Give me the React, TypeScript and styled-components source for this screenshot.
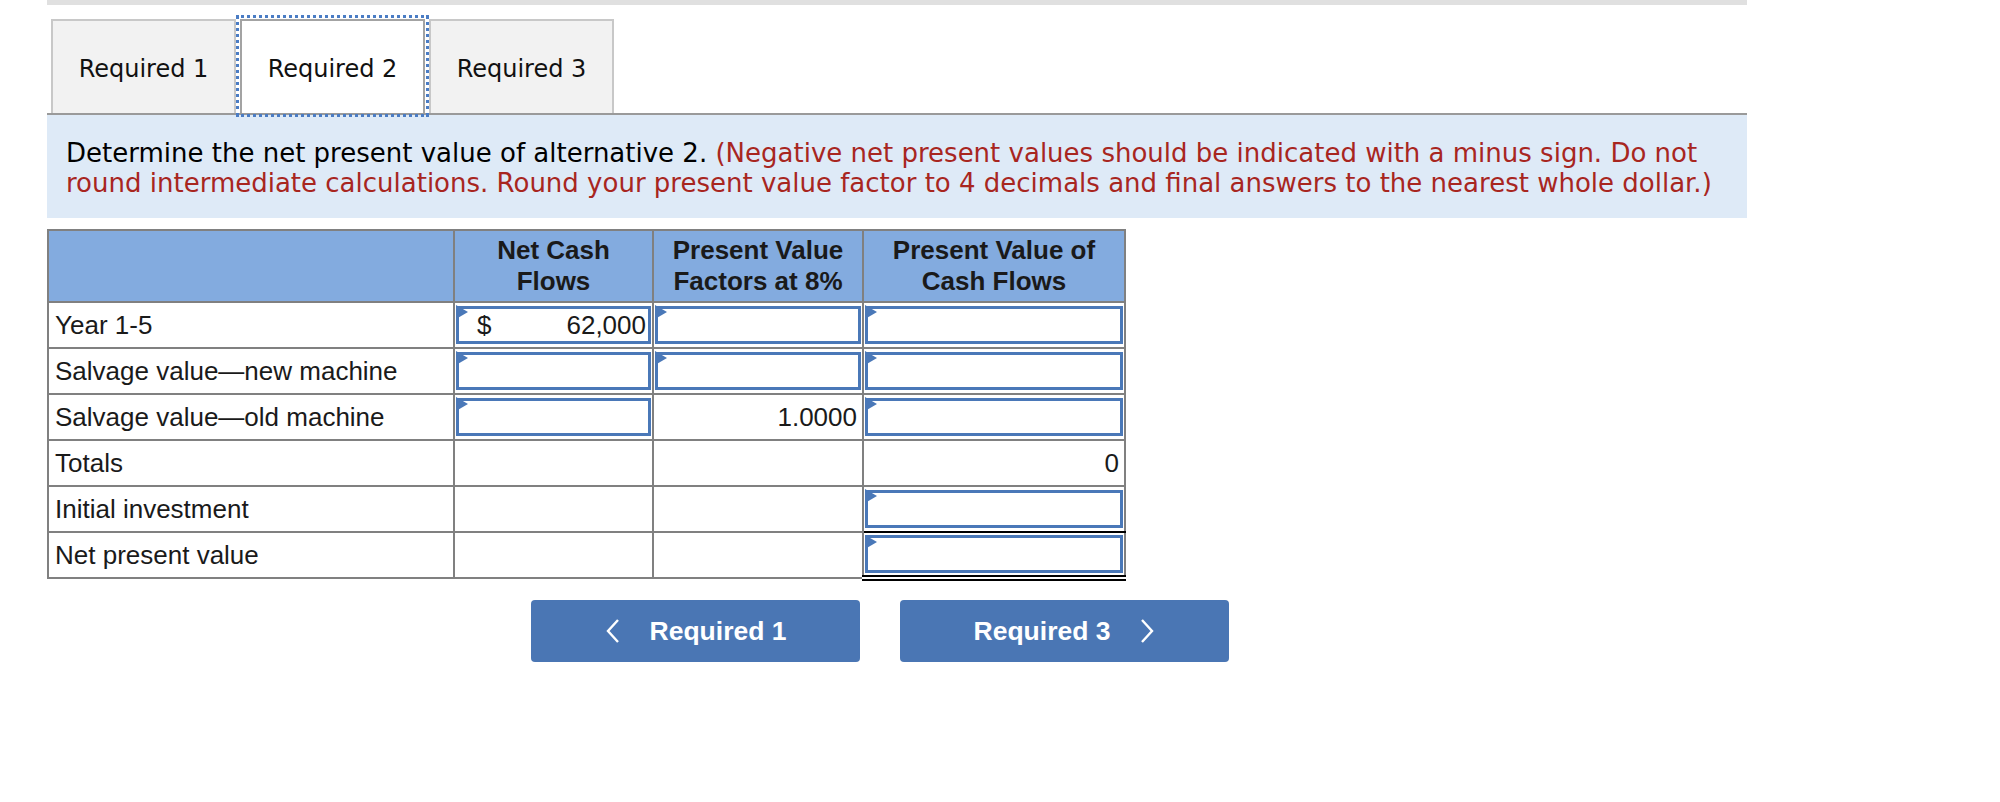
import styled, { createGlobalStyle } from 'styled-components';

const GlobalStyle = createGlobalStyle`
  body {
    margin: 0;
    background: #fff;
    font-family: "Liberation Sans", Arial, sans-serif;
  }
`;

type Rule = 'single' | 'double' | undefined;

type Cell = {
  kind: 'input' | 'text' | 'empty';
  value?: string;
  dollar?: boolean;
  rule?: Rule;
};

type Row = { label: string; cells: Cell[] };

const rows: Row[] = [
  {
    label: 'Year 1-5',
    cells: [
      { kind: 'input', value: '62,000', dollar: true },
      { kind: 'input' },
      { kind: 'input' },
    ],
  },
  {
    label: 'Salvage value\u2014new machine',
    cells: [{ kind: 'input' }, { kind: 'input' }, { kind: 'input' }],
  },
  {
    label: 'Salvage value\u2014old machine',
    cells: [{ kind: 'input' }, { kind: 'text', value: '1.0000' }, { kind: 'input' }],
  },
  {
    label: 'Totals',
    cells: [{ kind: 'empty' }, { kind: 'empty' }, { kind: 'text', value: '0' }],
  },
  {
    label: 'Initial investment',
    cells: [{ kind: 'empty' }, { kind: 'empty' }, { kind: 'input', rule: 'single' }],
  },
  {
    label: 'Net present value',
    cells: [{ kind: 'empty' }, { kind: 'empty' }, { kind: 'input', rule: 'double' }],
  },
];

const ChevronLeft = () => (
  <svg width="15" height="26" viewBox="0 0 15 26" fill="none">
    <polyline points="13,2 3,13 13,24" stroke="#fff" strokeWidth="2.4" />
  </svg>
);

const ChevronRight = () => (
  <svg width="15" height="26" viewBox="0 0 15 26" fill="none">
    <polyline points="2,2 12,13 2,24" stroke="#fff" strokeWidth="2.4" />
  </svg>
);

const App = () => {
  return (
    <Page>
      <GlobalStyle />
      <TopBar />
      <Tabs>
        <Tab>Required 1</Tab>
        <Tab $active>Required 2</Tab>
        <Tab>Required 3</Tab>
      </Tabs>
      <Question>
        Determine the net present value of alternative 2.{' '}
        <Hint>
          (Negative net present values should be indicated with a minus sign. Do not
          round intermediate calculations. Round your present value factor to 4
          decimals and final answers to the nearest whole dollar.)
        </Hint>
      </Question>

      <Table>
        <colgroup>
          <col style={{ width: 406 }} />
          <col style={{ width: 199 }} />
          <col style={{ width: 210 }} />
          <col style={{ width: 262 }} />
        </colgroup>
        <thead>
          <tr>
            <HeadCell />
            <HeadCell>
              Net Cash
              <br />
              Flows
            </HeadCell>
            <HeadCell>
              Present Value
              <br />
              Factors at 8%
            </HeadCell>
            <HeadCell>
              Present Value of
              <br />
              Cash Flows
            </HeadCell>
          </tr>
        </thead>
        <tbody>
          {rows.map((row) => (
            <BodyRow key={row.label}>
              <LabelCell>{row.label}</LabelCell>
              {row.cells.map((cell, i) => (
                <ValueCell key={i} $rule={cell.rule}>
                  {cell.kind === 'input' && (
                    <>
                      <InputBox>
                        {cell.dollar && <Dollar>$</Dollar>}
                        <span>{cell.value}</span>
                      </InputBox>
                      <Marker />
                    </>
                  )}
                  {cell.kind === 'text' && <PlainValue>{cell.value}</PlainValue>}
                </ValueCell>
              ))}
            </BodyRow>
          ))}
        </tbody>
      </Table>

      <Nav>
        <NavButton>
          <ChevronLeft />
          <span>Required 1</span>
        </NavButton>
        <NavButton>
          <span>Required 3</span>
          <ChevronRight />
        </NavButton>
      </Nav>
    </Page>
  );
};

export default App;

const Page = styled.div`
  margin-left: 47px;
  width: 1700px;
  padding-bottom: 40px;
`;

const TopBar = styled.div`
  height: 5px;
  background: #e0e0e0;
`;

const Tabs = styled.div`
  display: flex;
  gap: 4px;
  margin-top: 14px;
  padding-left: 4px;
  height: 94px;
`;

const Tab = styled.div<{ $active?: boolean }>`
  display: flex;
  align-items: center;
  justify-content: center;
  box-sizing: border-box;
  width: 185px;
  padding-top: 3px;
  font-family: "DejaVu Sans", Verdana, sans-serif;
  font-size: 24px;
  color: #111;
  background: ${(p) => (p.$active ? '#fff' : '#f2f2f2')};
  border: 2px solid ${(p) => (p.$active ? '#a3a3a3' : '#c8c8c8')};
  border-bottom: none;
  outline: ${(p) => (p.$active ? '3px dotted #4a7cc4' : 'none')};
  outline-offset: 1px;
  position: relative;
  z-index: ${(p) => (p.$active ? 1 : 0)};
`;

const Question = styled.div`
  background: #deeaf7;
  border-top: 2px solid #9a9a9a;
  padding: 23px 19px 20px;
  font-family: "DejaVu Sans", Verdana, sans-serif;
  font-size: 26px;
  line-height: 30px;
  color: #000;
`;

const Hint = styled.span`
  color: #a8261f;
`;

const Table = styled.table`
  margin-top: 11px;
  width: 1077px;
  table-layout: fixed;
  border-collapse: collapse;
  font-family: "Liberation Sans", Arial, sans-serif;
  font-size: 26px;
  color: #1a1a1a;
`;

const HeadCell = styled.th`
  background: #83abdf;
  border: 2px solid #808080;
  height: 70px;
  padding: 0;
  line-height: 31px;
  font-weight: bold;
  text-align: center;
`;

const BodyRow = styled.tr`
  height: 46px;
`;

const LabelCell = styled.td`
  border: 2px solid #808080;
  padding: 0 6px;
  text-align: left;
  white-space: nowrap;
`;

const ValueCell = styled.td<{ $rule?: Rule }>`
  position: relative;
  border: 2px solid #808080;
  border-bottom: ${(p) =>
    p.$rule === 'double'
      ? '6px double #000'
      : p.$rule === 'single'
      ? '2px solid #000'
      : '2px solid #808080'};
  padding: 2px 1px;
  text-align: right;
`;

const InputBox = styled.div`
  display: flex;
  align-items: center;
  justify-content: space-between;
  height: 38px;
  box-sizing: border-box;
  padding: 0 2px 0 18px;
  border: 3px solid #4a78b8;
  background: #fff;
`;

const Dollar = styled.span`
  color: #1a1a1a;
`;

const Marker = styled.span`
  position: absolute;
  top: 2px;
  left: 1px;
  width: 0;
  height: 0;
  border-top: 7px solid transparent;
  border-bottom: 7px solid transparent;
  border-left: 12px solid #4a78b8;
`;

const PlainValue = styled.span`
  display: block;
  padding-right: 4px;
`;

const Nav = styled.div`
  display: flex;
  gap: 40px;
  margin-top: 19px;
  padding-left: 484px;
`;

const NavButton = styled.button`
  display: flex;
  align-items: center;
  justify-content: center;
  gap: 30px;
  width: 329px;
  height: 62px;
  border: none;
  border-radius: 4px;
  background: #4a76b4;
  color: #fff;
  font-family: "Liberation Sans", Arial, sans-serif;
  font-size: 26.5px;
  font-weight: bold;
  cursor: pointer;
`;
